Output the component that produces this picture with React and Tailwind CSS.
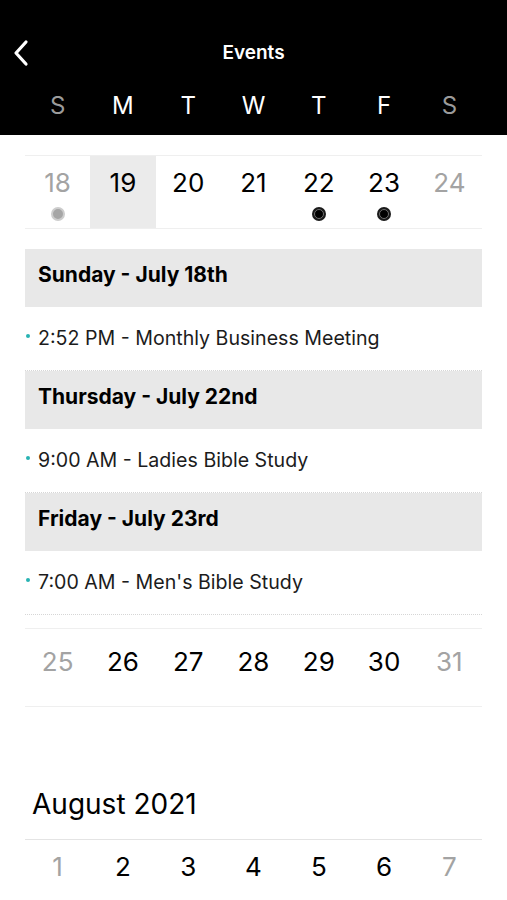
import React from 'react';

const weekdays = ['S', 'M', 'T', 'W', 'T', 'F', 'S'];

const sections = [
  { title: 'Sunday - July 18th', event: '2:52 PM - Monthly Business Meeting' },
  { title: 'Thursday - July 22nd', event: '9:00 AM - Ladies Bible Study' },
  { title: 'Friday - July 23rd', event: '7:00 AM - Men\'s Bible Study' },
];

const Dot = ({ kind }) => {
  if (kind === 'gray') {
    return <span className="block w-[14px] h-[14px] rounded-full bg-[#a6a6a6] border-[2px] border-[#cdcdcd]"></span>;
  }
  if (kind === 'black') {
    return (
      <span className="flex items-center justify-center w-[14px] h-[14px] rounded-full bg-[#1a1a1a]">
        <span className="block w-[10px] h-[10px] rounded-full bg-black border border-[#6f6f6f]"></span>
      </span>
    );
  }
  return <span className="block w-[14px] h-[14px]"></span>;
};

const App = () => {
  const week1 = [
    { n: 18, muted: true, dot: 'gray' },
    { n: 19, selected: true },
    { n: 20 },
    { n: 21 },
    { n: 22, dot: 'black' },
    { n: 23, dot: 'black' },
    { n: 24, muted: true },
  ];
  const week2 = [25, 26, 27, 28, 29, 30, 31];
  const week3 = [1, 2, 3, 4, 5, 6, 7];

  return (
    <div className="w-[507px] h-[900px] overflow-hidden bg-white" style={{ fontFamily: 'Inter, "Open Sans", sans-serif' }}>
      {/* Header */}
      <div className="bg-black h-[135px] flex flex-col">
        <div className="relative h-[90px] flex items-center justify-center pt-[14px]">
          <svg className="absolute left-[12px] top-[39px]" width="18" height="28" viewBox="0 0 18 28" fill="none">
            <path d="M14 3 L4 14 L14 25" stroke="white" strokeWidth="3.2" strokeLinecap="round" strokeLinejoin="round" />
          </svg>
          <span className="text-white text-[19px] font-semibold mt-[2px]">Events</span>
        </div>
        <div className="grid grid-cols-7 px-[25px] -mt-[2px]">
          {weekdays.map((d, i) => (
            <span
              key={i}
              className={`text-center text-[24px] ${i === 0 || i === 6 ? 'text-[#9b9b9b]' : 'text-white'}`}
            >
              {d}
            </span>
          ))}
        </div>
      </div>

      <div className="px-[25px]">
        {/* Week 1 */}
        <div className="mt-[20px] border-t border-b border-[#efefef] grid grid-cols-7 h-[74px]">
          {week1.map((d) => (
            <div
              key={d.n}
              className={`flex flex-col items-center pt-[10px] ${d.selected ? 'bg-[#ebebeb]' : ''}`}
            >
              <span className={`text-[26px] leading-[34px] ${d.muted ? 'text-[#a3a3a3]' : 'text-black'}`}>{d.n}</span>
              <div className="mt-[7px]">
                <Dot kind={d.dot} />
              </div>
            </div>
          ))}
        </div>

        {/* Event list */}
        <div className="mt-[20px]">
          {sections.map((s) => (
            <div key={s.title}>
              <div className="bg-[#e8e8e8] h-[58px] flex items-center px-[13px] pb-[6px]">
                <span className="text-[21px] font-bold text-black">{s.title}</span>
              </div>
              <div className="h-[64px] flex items-center border-b border-dotted border-[#d6d6d6]">
                <span className="w-[4px] h-[4px] rounded-full bg-[#27b3b3] ml-[1px] mr-[8px] -mt-[6px]"></span>
                <span className="text-[19.6px] text-[#1c1c1c]">{s.event}</span>
              </div>
            </div>
          ))}
        </div>

        {/* Week 2 */}
        <div className="mt-[13px] border-t border-b border-[#efefef] grid grid-cols-7 h-[79px]">
          {week2.map((n, i) => (
            <div key={n} className="flex justify-center pt-[16px]">
              <span className={`text-[26px] leading-[34px] ${i === 0 || i === 6 ? 'text-[#a3a3a3]' : 'text-black'}`}>{n}</span>
            </div>
          ))}
        </div>

        {/* August */}
        <div className="mt-[76px] px-[7px]">
          <span className="text-[28px] text-black">August 2021</span>
        </div>
        <div className="mt-[14px] border-t border-[#e4e4e4] grid grid-cols-7">
          {week3.map((n, i) => (
            <div key={n} className="flex justify-center pt-[10px]">
              <span className={`text-[26px] leading-[34px] ${i === 0 || i === 6 ? 'text-[#a3a3a3]' : 'text-black'}`}>{n}</span>
            </div>
          ))}
        </div>
      </div>
    </div>
  );
};

export default App;
